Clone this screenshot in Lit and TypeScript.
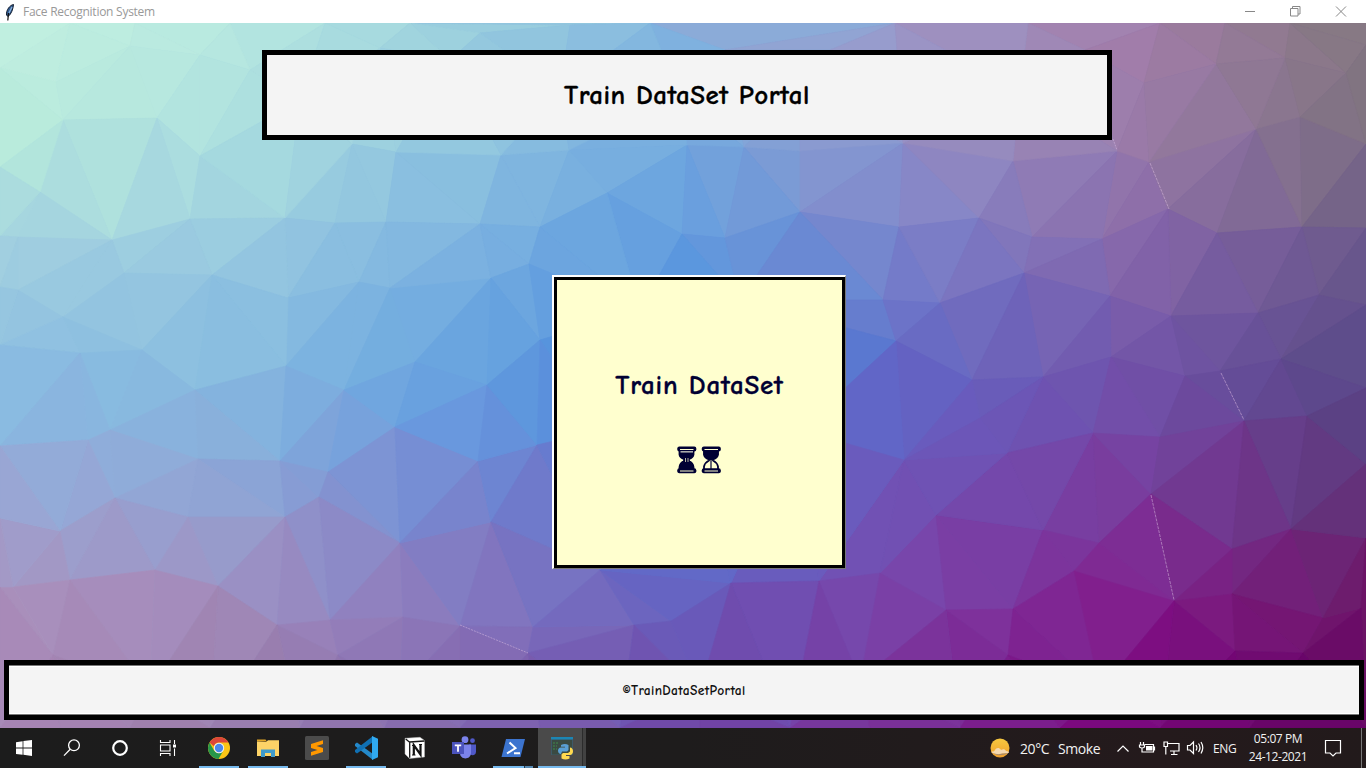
import { LitElement, html, svg, css } from "lit";
import { customElement } from "lit/decorators.js";

type P = [number, number];

// Vertices of the low-poly wallpaper, in screen pixels.
const POINTS: number[] = [
  0,23, 70,23, 135,23, 230,23, 325,23, 410,23, 480,33, 570,25, 650,23, 725,50, 830,50, 895,23, 1028,23, 1085,50, 1160,23, 1225,23, 1290,23, 1366,23,
  0,68, 56,82, 130,46, 200,55, 250,70, 380,48, 63,120, 157,118, 200,156, 112,240, 190,219, 285,218, 352,144, 396,152, 386,222, 335,223, 40,192,
  18,237, 0,167, 0,236, 124,273, 212,275, 288,298, 359,282, 390,288, 63,317, 18,290, 0,287, 0,345, 80,353, 142,350, 286,366, 415,362, 195,390,
  501,155, 569,150, 607,193, 687,145, 744,147, 800,151, 800,212, 682,234, 725,238, 540,227, 480,224, 529,264, 491,278, 540,340, 903,143, 899,227,
  883,300, 896,341, 740,300, 640,310, 1013,161, 1117,151, 1149,162, 1168,209, 979,218, 1032,237, 1102,239, 1217,233, 1256,129, 1300,117, 1302,227,
  1285,58, 1216,64, 1346,73, 1366,144, 1366,228, 1024,273, 1110,296, 1171,316, 1258,313, 1319,295, 1366,305, 940,303, 1281,359, 1111,357, 1185,376,
  1220,371, 1043,377, 972,380, 1144,83, 1366,45, 110,430, 88,440, 115,498, 60,531, 280,461, 285,517, 198,459, 188,517, 155,570, 70,580, 13,587,
  0,587, 218,586, 328,472, 344,390, 395,427, 319,497, 400,543, 277,625, 330,620, 338,655, 403,617, 460,626, 53,655, 0,446, 0,518,
  491,522, 478,461, 487,385, 537,445, 533,627, 634,625, 671,621, 731,583, 528,653, 819,581, 880,573, 936,515, 1043,530,
  1099,543, 1093,433, 1160,437, 1151,494, 1244,421, 1307,416, 1232,549, 1291,529, 1174,601, 1074,571, 1013,609, 946,610, 1232,594, 1323,618,
  1235,651, 1303,653, 1361,608, 1366,538, 1366,464, 1007,453, 980,418, 904,460, 1366,388, 1008,655, 600,570, 600,430, 700,440, 800,430, 700,380,
  0,728, 60,728, 130,728, 210,728, 300,728, 385,728, 460,728, 540,728, 620,728, 700,728, 790,728, 870,728, 960,728, 1060,728, 1160,728, 1250,728, 1366,728,
  150,690, 400,690, 700,690, 860,680, 1100,690, 450,60, 560,90, 680,95, 800,90, 900,90, 1020,90, 300,100,
];

// Colour field sampled by each facet at its centroid.
const XS = [0, 228, 455, 683, 910, 1138, 1366];
const YS = [30, 140, 257, 375, 425, 492, 610, 727];
const FIELD = [
  "c2f0e0 b8e9e0 9dd1de 82b4df 9e9aca a37da9 84787f",
  "b8ebdb ade0df 90c5df 73a9df 9491c8 997aa8 7d7080",
  "a0cee0 98c9e0 7cb2e0 5f9bdf 787fca 8565aa 69578a",
  "8abce1 86bbe0 64a2df 4a88dc 6166c5 7053a9 574886",
  "8bb3df 88b2dc 6998de 4f7cd6 675ec2 7449a6 594080",
  "99a8d6 8fa5d5 7586d0 5f6dcb 6f53b6 7a3a9b 5f3579",
  "aa8fbb a38cbd 8a77bb 6560c0 7c40a6 821e8c 6e1667",
  "a882b4 9a7da8 8266ae 7046a6 7a2c95 7a007a 5f0060",
].map((r) => r.split(" ").map((h) => [0, 2, 4].map((i) => parseInt(h.substr(i, 2), 16))));

function cell(list: number[], v: number): [number, number] {
  let i = 0;
  while (i < list.length - 2 && v > list[i + 1]) i++;
  return [i, Math.max(0, Math.min(1, (v - list[i]) / (list[i + 1] - list[i])))];
}

function colorAt(x: number, y: number): string {
  const [i, u] = cell(XS, x);
  const [j, v] = cell(YS, y);
  const c = [0, 1, 2].map((k) =>
    Math.round(
      (FIELD[j][i][k] * (1 - u) + FIELD[j][i + 1][k] * u) * (1 - v) +
        (FIELD[j + 1][i][k] * (1 - u) + FIELD[j + 1][i + 1][k] * u) * v,
    ),
  );
  return `rgb(${c.join(",")})`;
}

// Bowyer-Watson Delaunay triangulation.
function triangulate(pts: P[]): [number, number, number][] {
  const n = pts.length;
  const all: P[] = [...pts, [-9000, -5000], [10000, -5000], [600, 14000]];
  const make = (a: number, b: number, c: number) => {
    const [ax, ay] = all[a], [bx, by] = all[b], [cx, cy] = all[c];
    const d = 2 * (ax * (by - cy) + bx * (cy - ay) + cx * (ay - by)) || 1e-9;
    const A = ax * ax + ay * ay, B = bx * bx + by * by, C = cx * cx + cy * cy;
    const x = (A * (by - cy) + B * (cy - ay) + C * (ay - by)) / d;
    const y = (A * (cx - bx) + B * (ax - cx) + C * (bx - ax)) / d;
    return { t: [a, b, c] as [number, number, number], x, y, r: (ax - x) ** 2 + (ay - y) ** 2 };
  };
  let tris = [make(n, n + 1, n + 2)];
  for (let p = 0; p < n; p++) {
    const edges = new Map<string, [number, number]>();
    tris = tris.filter((q) => {
      if ((all[p][0] - q.x) ** 2 + (all[p][1] - q.y) ** 2 >= q.r) return true;
      for (const [a, b] of [[q.t[0], q.t[1]], [q.t[1], q.t[2]], [q.t[2], q.t[0]]]) {
        const key = a < b ? `${a}-${b}` : `${b}-${a}`;
        if (edges.has(key)) edges.delete(key);
        else edges.set(key, [a, b]);
      }
      return false;
    });
    edges.forEach(([a, b]) => tris.push(make(a, b, p)));
  }
  return tris.map((q) => q.t).filter((t) => t.every((i) => i < n));
}

@customElement("low-poly")
class LowPoly extends LitElement {
  static styles = css`
    :host { display: block; overflow: hidden; background: linear-gradient(90deg, #a8d8e0, #5a90dc 50%, #6a4890); }
    svg { display: block; }
  `;
  render() {
    const pts: P[] = [];
    for (let i = 0; i < POINTS.length; i += 2)
      pts.push([POINTS[i] + (i % 14) * 0.001, POINTS[i + 1] + (i % 22) * 0.001]);
    const facets = triangulate(pts).map((t) => {
      const [a, b, c] = t.map((i) => pts[i]);
      const fill = colorAt((a[0] + b[0] + c[0]) / 3, (a[1] + b[1] + c[1]) / 3);
      return svg`<path d=${`M${a[0].toFixed(1)} ${a[1].toFixed(1)}L${b[0].toFixed(1)} ${b[1].toFixed(1)}L${c[0].toFixed(1)} ${c[1].toFixed(1)}Z`} fill=${fill} stroke=${fill} stroke-width=".7"/>`;
    });
    return html`<svg width="1366" height="705" viewBox="0 23 1366 705">
      ${facets}
      <g stroke="#d9b8e0" stroke-opacity=".6" stroke-width=".9" fill="none">
        <path d="M1150 163L1169 209M1221 373L1244 420M1151 495L1174 600" stroke-dasharray="3 1"/>
        <path d="M460 625L528 653M1113 139L1117 150" stroke-dasharray="2 1"/>
      </g>
    </svg>`;
  }
}

const icons = {
  start: svg`<path fill="#fff" d="M4 6.2l6.6-1v6.3H4zM11.4 5.1L20 3.9v7.6h-8.6zM4 12.4h6.6v6.4L4 17.9zM11.4 12.4H20V20l-8.6-1.2z"/>`,
  search: svg`<g fill="none" stroke="#fff" stroke-width="1.3"><circle cx="14" cy="9.3" r="5.4"/><path d="M10.2 13.2L4 19.6"/></g>`,
  cortana: svg`<circle cx="12" cy="12" r="6.8" fill="none" stroke="#fff" stroke-width="2.2"/>`,
  tasks: svg`<g fill="none" stroke="#fff" stroke-width="1.1"><path d="M4.500 4v2.500h9.500V4M4.500 20v-2.500h9.500V20M4.500 9h9.500v6h-9.500zM18.500 4v4M18.500 12.500V20"/></g><path fill="#fff" d="M17 8.500h3v3h-3z"/>`,
  chrome: svg`<circle cx="12" cy="12" r="11" fill="#fbc516"/><path fill="#dc4639" d="M2.500 6.500A11 11 0 0 1 21.500 6.500H12a5.500 5.500 0 0 0-5.200 3.800z"/><path fill="#26964a" d="M2.500 6.500A11 11 0 0 0 11.500 23l4.800-8.200a5.500 5.500 0 0 1-9.100 0z"/><circle cx="12" cy="12" r="5.200" fill="#eef3f8"/><circle cx="12" cy="12" r="4.200" fill="#4a88ea"/>`,
  explorer: svg`<path fill="#e2a526" d="M1 3.500h8.500l1.500 2H1z"/><path fill="#fdd367" d="M1 5.500L10 6l2-1.700h11V20H1z"/><path fill="#3f9acb" d="M5 13.500h14V21h-4v-4H9v4H5z"/>`,
  sublime: svg`<rect width="24" height="24" rx="1.500" fill="#4b4b4b"/><path fill="#ff9800" d="M6 8l12-3.700V8l-6.500 2 6.500 2v4L6 19.700V16l6.500-2L6 12z"/>`,
  code: svg`<path fill="#2489ca" d="M1 8l2-1.600L19 18v6L1 10z"/><path fill="#1070b3" d="M1 16l2 1.600L19 6V0L1 14z"/><path fill="#30a9f0" d="M18 0l6 2.700v18.600L18 24z"/>`,
  notion: svg`<path fill="#fff" stroke="#bbb" stroke-width=".5" d="M2 2.300l15-1 4.500 3.200V21L6.500 22.500 2 18z"/><path fill="none" stroke="#161616" stroke-width="1.300" d="M2.700 3l4 3.300v15.500M6.500 6l15-1"/><path fill="none" stroke="#111" stroke-width="2.200" d="M10.800 19V9.200l6.700 9.300V8.500"/><path stroke="#111" d="M9 9.500h3M9 19h3.500M16 8.500h3"/>`,
  teams: svg`<circle cx="13" cy="3.700" r="3.400" fill="#7b83eb"/><circle cx="20.500" cy="4.700" r="2.400" fill="#5059c9"/><path fill="#5059c9" d="M17 8.500h7v7c0 5-6 4.500-7 1z"/><path fill="#7b83eb" d="M8 8.500h11V17c0 7-11 7.500-11 0z"/><path fill="#4b53bc" d="M0 6h12v12H0z"/><path fill="#fff" d="M2.800 8.500h6.400v1.700H6.900v5.600H5.100v-5.600H2.800z"/>`,
  shell: svg`<path fill="#3c74cf" d="M5 3h19l-4.500 18H.5z"/><path fill="none" stroke="#fff" stroke-width="2" d="M8.500 6.500l6 5.500-8.500 5.500M13 17.300h6"/>`,
  python: svg`<path fill="#3d5a68" d="M1 1h22v18H1z"/><path fill="#1c86b5" d="M1 1h22v2.400H1z"/><path fill="#3a4a42" d="M2 4h20v14.500H2z"/><path stroke="#3f8a4b" stroke-dasharray="2 1" d="M3 7h6M3 10h4M3 13h4"/><g transform="translate(1.500 1)"><path fill="#5a9fd4" d="M9.500 8q4-2 7.500 0v5l-1.500 1.500h-5L9.500 17C5.500 17 5.500 10.500 9.500 10.500h4v-.8H9.500z"/><path fill="#ffd94f" d="M18.500 10.500c4 0 4 7.500 0 7.500h-4v1h3.500v2.500q-4 2-8 0v-4l1.500-1.500h5l2-1.500z"/></g>`,
};

const APPS = [
  { icon: "chrome", cls: "app run" },
  { icon: "explorer", cls: "app run" },
  { icon: "sublime", cls: "app" },
  { icon: "code", cls: "app run" },
  { icon: "notion", cls: "app" },
  { icon: "teams", cls: "app" },
  { icon: "shell", cls: "app run split" },
  { icon: "python", cls: "app active" },
] as const;

@customElement("task-bar")
class TaskBar extends LitElement {
  static styles = css`
    :host { display: flex; height: 40px; color: #f2f2f2; background: linear-gradient(90deg, #1c1c1c, #1e1c1c 50%, #241a1c 85%, #221a1b); font-family: "Segoe UI", "Open Sans", sans-serif; }
    svg { display: block; flex: none; }
    .sys { display: flex; align-items: center; justify-content: center; width: 48px; }
    .apps { display: flex; margin-left: 3px; gap: 1px; }
    .app { box-sizing: border-box; width: 48px; height: 40px; display: flex; align-items: center; justify-content: center; }
    .run { width: 40px; margin: 0 4px; background: linear-gradient(#76b9ed, #76b9ed) bottom / 100% 2px no-repeat; }
    .split { background-image: linear-gradient(90deg, #76b9ed 31px, #24384a 31px, #24384a 32px, #5689b2 32px); }
    .active { background: linear-gradient(#76b9ed, #76b9ed) bottom / 100% 2px no-repeat, linear-gradient(90deg, #4a4a4a 44px, #2c2c2c 44px, #2c2c2c 45px, #424242 45px); }
    .tray { display: flex; flex: 1; align-items: center; }
    .weather { margin-left: 403px; display: flex; align-items: center; font-size: 14px; white-space: nowrap; }
    .temp { margin-left: 9px; width: 38px; letter-spacing: -.4px; }
    .sky { width: 57px; letter-spacing: -.4px; }
    .status { display: flex; align-items: center; }
    .lang { margin-left: 6px; width: 25px; font-size: 12px; letter-spacing: -.4px; }
    .clock { margin-left: 9px; width: 62px; text-align: center; font-size: 12px; line-height: 18px; letter-spacing: -.42px; white-space: nowrap; }
    .note { margin-left: 14px; }
    .peek { margin-left: auto; width: 4px; height: 40px; border-left: 1px solid #777; }
  `;
  render() {
    return html`
      ${(["start", "search", "cortana", "tasks"] as const).map(
        (k) => html`<div class="sys"><svg width="24" height="24" viewBox="0 0 24 24">${icons[k]}</svg></div>`,
      )}
      <div class="apps">
        ${APPS.map((a) => html`<div class=${a.cls}><svg width="24" height="24" viewBox="0 0 24 24">${icons[a.icon]}</svg></div>`)}
      </div>
      <div class="tray">
        <div class="weather">
          <svg width="22" height="22" viewBox="0 0 22 22">
            <defs><linearGradient id="sun" x2="0" y2="1"><stop stop-color="#f6c840"/><stop offset="1" stop-color="#f0a02c"/></linearGradient></defs>
            <circle cx="11" cy="11" r="9.500" fill="url(#sun)"/>
            <path fill="#f5d9b0" d="M2 15c2-1 3 0 4-2s4-3 6 0c2-1 4-1 5 1 2 0 3 1 3 1.500-3 2-6 0-8 1.500s-7 0-10-2z"/>
            <path fill="#a98a68" d="M3 16c4 1 6 1.500 9 .8s5-.8 7-.3c-3 1-7 2.300-11 1.500z"/>
          </svg>
          <span class="temp">20°C</span><span class="sky">Smoke</span>
        </div>
        <div class="status">
          <svg width="92" height="24" viewBox="1115 736 92 24" fill="none" stroke="#fff" stroke-width="1.200">
            <path d="M1117.500 751.500l5.500-5.500 5.500 5.500"/>
            <path d="M1144.500 744.500h9v7.500h-9.500M1154.500 746.500v4"/><path fill="#fff" stroke="none" d="M1146 746h6.500v4.500h-6.500z"/>
            <path d="M1140.500 742v3M1143.500 742v3M1139.500 745h5v2q-2.500 2-5 0zM1142 748v4h2"/>
            <path d="M1167.500 743.500h11.500v7.500h-9M1174 751v3M1171 754.500h6.500M1164 742h3.500v4.500h-3.500zM1165.800 746.500v8"/>
            <path d="M1187.500 745.500h2.500l3.500-3.500v11.500l-3.500-3.500h-2.500zM1196 745q1.800 2.500 0 5.500M1198.500 743.500q3 4 0 8.500M1201 742q3.500 5.500 0 11.500"/>
          </svg>
          <span class="lang">ENG</span>
        </div>
        <div class="clock"><div>05:07 PM</div><div>24-12-2021</div></div>
        <svg class="note" width="20" height="20" viewBox="0 0 20 20" fill="none" stroke="#fff" stroke-width="1.200"><path d="M2.500 2.500h15v12.500h-4.500l-3 3-3-3h-4.500z"/></svg>
        <div class="peek"></div>
      </div>`;
  }
}

@customElement("app-root")
class AppRoot extends LitElement {
  static styles = css`
    :host { display: flex; flex-direction: column; width: 1366px; height: 768px; overflow: hidden; }
    .titlebar { display: flex; align-items: center; height: 23px; background: #fff; color: #999; font: 12px/23px "Segoe UI", "Open Sans", sans-serif; }
    .feather { margin-left: 4px; }
    .name { margin-left: 7px; letter-spacing: -.26px; white-space: nowrap; }
    .controls { margin-left: auto; margin-right: 18px; }
    svg { display: block; flex: none; }
    .stage { display: grid; height: 705px; }
    .stage > * { grid-area: 1 / 1; }
    .window { display: flex; flex-direction: column; z-index: 1; font-family: "Comic Sans MS", "Comic Neue", "Noto Sans", sans-serif; }
    .banner, .footer { box-sizing: border-box; border: 5px solid #000; background: #f4f4f4; display: flex; align-items: center; justify-content: center; white-space: nowrap; }
    .banner { width: 850px; height: 90px; margin: 27px 0 0 262px; font-size: 27px; font-weight: 600; color: #000; }
    .tile { box-sizing: border-box; width: 294px; height: 294px; margin: 135px 0 0 552px; border: solid; border-width: 2px 1px 1px 2px; border-color: #fff #777 #777 #fff; display: flex; }
    .face { flex: 1; border: 3px solid #000; background: #ffffcf; color: #000033; display: flex; flex-direction: column; align-items: center; padding-top: 88px; font-size: 27px; line-height: 36px; font-weight: 600; white-space: nowrap; }
    .glass { margin-top: 42px; }
    .footer { width: 1360px; height: 60px; margin: 91px 0 0 4px; box-shadow: inset 0 1px #777, inset 0 -1px #777, inset 0 2px #fff, inset 0 -2px #fff; font-size: 13.5px; font-weight: 700; color: #111; }
    .t1, .t2 { -webkit-text-stroke: .3px currentColor; }
    .t1 { letter-spacing: .5px; word-spacing: 0; }
    .t2 { letter-spacing: .8px; word-spacing: 0; }
    .t3 { letter-spacing: .35px; }
  `;
  render() {
    return html`
      <div class="titlebar">
        <svg class="feather" width="12" height="18" viewBox="0 0 12 18">
          <path fill="#315b91" stroke="#111b2c" d="M9.500 1.500C6 2 2 7 2.500 12l1.500 1.500C7.500 11 9 6 9.500 1.500z"/>
          <path stroke="#8db4dc" stroke-width="1.300" d="M8 4L5 10"/><path stroke="#111" stroke-width="1.200" d="M4.500 10L3.800 17.500"/>
        </svg>
        <span class="name">Face Recognition System</span>
        <svg class="controls" width="106" height="20" viewBox="1242 1 106 20" fill="none" stroke="#888">
          <path d="M1245 10.500h10M1290.500 7.500h7.500v7.500h-7.500zM1292.500 7.500v-2h7.500v7.500h-2M1336 5.500l10 10M1346 5.500l-10 10"/>
        </svg>
      </div>
      <div class="stage">
        <low-poly></low-poly>
        <div class="window">
          <div class="banner"><span class="t1">Train DataSet Portal</span></div>
          <div class="tile"><div class="face">
            <span class="t2">Train DataSet</span>
            <svg class="glass" width="46" height="28" viewBox="0 0 46 28">
              <g fill="none" stroke="#000033" stroke-width="1.800">
                <path fill="#000033" d="M2.500 5.500v3q.5 3 4.500 4.500v2q-4 2-4.500 6v3h14v-3q-.5-4-4.500-6v-2q4-1.500 4.500-4.500v-3z"/>
                <path d="M27 4v4.500q.5 3 5 5v1q-4 2-5 6V24h14v-3.500q-1-4-5-6v-1q4.500-2 5-5V4z"/>
                <path fill="#000033" d="M27.500 5h13v3.500q-1 3-5 4.500h-3q-4-1.500-5-4.500z"/><path stroke-width="1.200" d="M34 13v10"/>
              </g>
              <g fill="#000033"><rect x=".3" y=".5" width="19" height="5" rx="2"/><rect x=".3" y="22.300" width="19" height="5" rx="2"/><rect x="24.800" y=".5" width="19" height="5" rx="2"/><rect x="24.800" y="22.300" width="19" height="5" rx="2"/></g>
              <g stroke="#ffffcf" stroke-width="1"><path d="M3 3.500h13.500M3 25h13.500M27.500 3.500h13.500M27.500 25h13.500"/><path stroke="#aaa" stroke-width="1.600" d="M3.500 5.800h12.500"/><path stroke-width=".7" d="M8.500 12v4M11 12v4"/></g>
            </svg>
          </div></div>
          <div class="footer"><span class="t3">©TrainDataSetPortal</span></div>
        </div>
      </div>
      <task-bar></task-bar>`;
  }
}
